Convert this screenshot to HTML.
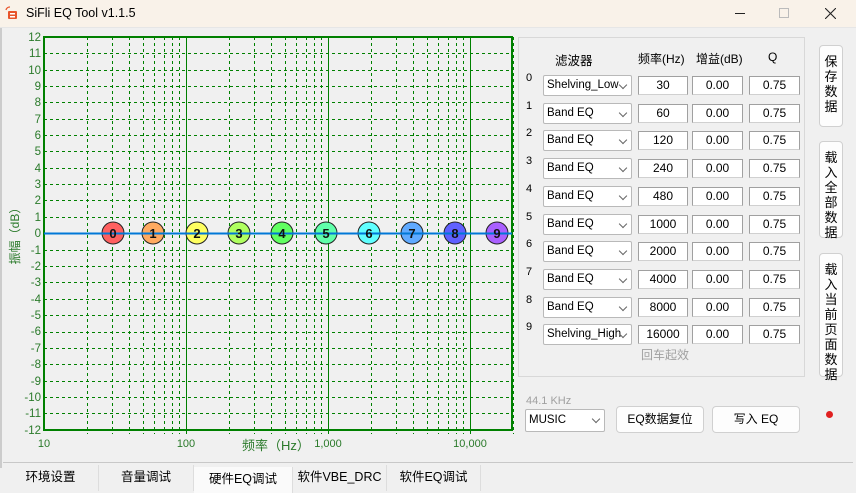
<!DOCTYPE html>
<html><head><meta charset="utf-8"><style>
*{box-sizing:border-box;margin:0;padding:0}
body{width:856px;height:493px;overflow:hidden;background:#f0f0f0;font-family:"Liberation Sans","Noto Sans CJK SC",sans-serif;font-size:12px;color:#000;position:relative}
.a{position:absolute}
.title{left:0;top:0;width:856px;height:28px;background:#f9f2e9;border-bottom:1px solid #e6e6e6}
.cb{position:absolute;height:21px;background:#fff;border:1px solid #b9b9b9;border-radius:2px;font-size:11.5px;line-height:19px;padding-left:3px;white-space:nowrap;overflow:hidden}
.cb:after{content:"";position:absolute;right:5px;top:6px;width:5px;height:5px;border-right:1px solid #666;border-bottom:1px solid #666;transform:rotate(45deg)}
.tb{position:absolute;height:19px;background:#fff;border:1px solid #a0a0a0;border-bottom-color:#d0d0d0;text-align:center;font-size:12px;line-height:17px}
.btn{position:absolute;background:#fdfdfd;border:1px solid #d0d0d0;border-radius:4px;text-align:center}
.vb{font-size:13px;line-height:15px;width:24px;left:819px;padding-top:8px}
.num{position:absolute;left:526px;font-size:11px}
.tab{position:absolute;top:465px;height:26px;text-align:center;line-height:24px;font-size:12.5px;border-right:1px solid #ddd}
</style></head><body>
<div class="a title">
<svg class="a" style="left:5px;top:6px" width="14" height="14"><rect x="3" y="5" width="9" height="8" rx="1" fill="#e8542a"/><rect x="5" y="7" width="5" height="1.5" fill="#fff"/><rect x="5" y="10" width="5" height="1.5" fill="#fff"/><path d="M1 4a4 4 0 0 1 4-3" stroke="#e8542a" fill="none" stroke-width="1.3"/></svg>
<div class="a" style="left:26px;top:6px;font-size:12.5px">SiFli EQ Tool v1.1.5</div>
<div class="a" style="left:735px;top:13px;width:10px;height:1px;background:#222"></div>
<div class="a" style="left:779px;top:8px;width:10px;height:10px;border:1px solid #bbb"></div>
<svg class="a" style="left:825px;top:8px" width="11" height="11"><path d="M0 0L11 11M11 0L0 11" stroke="#222" stroke-width="1.1"/></svg>
</div>
<div class="a" style="left:0;top:28px;width:2px;height:440px;background:#ccc"></div>
<svg class="a" style="left:0;top:28px" width="516" height="432" font-family="Liberation Sans,sans-serif">
<g id="g"></g>
</svg>
<svg class="a" style="left:0;top:0" width="516" height="460" font-family="Liberation Sans, Noto Sans CJK SC, sans-serif">
<g stroke="#008000" stroke-width="1" stroke-dasharray="3,3" fill="none">
<path d="M44 53.5H512M44 70.5H512M44 86.5H512M44 102.5H512M44 119.5H512M44 135.5H512M44 151.5H512M44 168.5H512M44 184.5H512M44 200.5H512M44 217.5H512M44 250.5H512M44 266.5H512M44 282.5H512M44 299.5H512M44 315.5H512M44 332.5H512M44 348.5H512M44 364.5H512M44 381.5H512M44 397.5H512M44 413.5H512"/>
<path d="M87.5 37V434M112.5 37V434M129.5 37V434M143.5 37V434M154.5 37V434M164.5 37V434M172.5 37V434M179.5 37V434M229.5 37V434M254.5 37V434M271.5 37V434M285.5 37V434M296.5 37V434M306.5 37V434M314.5 37V434M321.5 37V434M371.5 37V434M396.5 37V434M413.5 37V434M427.5 37V434M438.5 37V434M448.5 37V434M456.5 37V434M463.5 37V434M513.5 37V434"/>
</g>
<path d="M186.5 37V434M328.5 37V434M470.5 37V434" stroke="#008000" stroke-width="1"/>
<rect x="44" y="37" width="468" height="393" fill="none" stroke="#008000" stroke-width="2"/>
<g font-size="11.5" fill="#2a7a2a" text-anchor="end">
<text x="41" y="41">12</text><text x="41" y="57">11</text><text x="41" y="74">10</text><text x="41" y="90">9</text><text x="41" y="106">8</text><text x="41" y="123">7</text><text x="41" y="139">6</text><text x="41" y="155">5</text><text x="41" y="172">4</text><text x="41" y="188">3</text><text x="41" y="204">2</text><text x="41" y="221">1</text><text x="41" y="237">0</text><text x="41" y="254">-1</text><text x="41" y="270">-2</text><text x="41" y="286">-3</text><text x="41" y="303">-4</text><text x="41" y="319">-5</text><text x="41" y="335">-6</text><text x="41" y="352">-7</text><text x="41" y="368">-8</text><text x="41" y="385">-9</text><text x="41" y="401">-10</text><text x="41" y="417">-11</text><text x="41" y="434">-12</text>
</g>
<g font-size="11" fill="#2a7a2a" text-anchor="middle">
<text x="44" y="447">10</text><text x="186" y="447">100</text><text x="328" y="447">1,000</text><text x="470" y="447">10,000</text>
<text x="276" y="450" font-size="13">频率（Hz）</text>
</g>
<text transform="translate(19,233) rotate(-90)" text-anchor="middle" font-size="12" fill="#2a7a2a">振幅（dB）</text>
<g stroke="#222" stroke-width="1" font-size="13" text-anchor="middle">
<circle cx="113" cy="233" r="11" fill="#ff6060"/><circle cx="153" cy="233" r="11" fill="#ffaa60"/><circle cx="197" cy="233" r="11" fill="#ffff60"/><circle cx="239" cy="233" r="11" fill="#b0ff60"/><circle cx="282" cy="233" r="11" fill="#60ff60"/><circle cx="326" cy="233" r="11" fill="#60ffaa"/><circle cx="369" cy="233" r="11" fill="#60ffff"/><circle cx="412" cy="233" r="11" fill="#60aaff"/><circle cx="455" cy="233" r="11" fill="#6060ff"/><circle cx="497" cy="233" r="11" fill="#aa60ff"/>
</g>
<path d="M44 233.5H512" stroke="#0078d7" stroke-width="2"/>
<g font-size="13" fill="#111" text-anchor="middle" font-weight="bold">
<text x="113" y="238">0</text><text x="153" y="238">1</text><text x="197" y="238">2</text><text x="239" y="238">3</text><text x="282" y="238">4</text><text x="326" y="238">5</text><text x="369" y="238">6</text><text x="412" y="238">7</text><text x="455" y="238">8</text><text x="497" y="238">9</text>
</g>
</svg>
<div class="a" style="left:518px;top:37px;width:287px;height:340px;border:1px solid #d8d8d8"></div>
<div class="a" style="left:555px;top:50px;font-size:12.5px">滤波器</div>
<div class="a" style="left:638px;top:50px;font-size:12px">频率(Hz)</div>
<div class="a" style="left:696px;top:50px;font-size:12px">增益(dB)</div>
<div class="a" style="left:768px;top:50px;font-size:12px">Q</div>
<div id="rows"></div>
<div class="a" style="left:641px;top:346px;color:#a0a0a0;font-size:12px">回车起效</div>
<div class="btn vb" style="top:45px;height:82px">保存数据</div>
<div class="btn vb" style="top:141px;height:97px">载入全部数据</div>
<div class="btn vb" style="top:253px;height:124px">载入当前页面数据</div>
<div class="a" style="left:826px;top:411px;width:7px;height:7px;border-radius:50%;background:#e02020"></div>
<div class="a" style="left:526px;top:395px;color:#a0a0a0;font-size:11px">44.1 KHz</div>
<div class="cb" style="left:525px;top:409px;width:80px;height:23px;line-height:21px">MUSIC</div>
<div class="btn" style="left:616px;top:406px;width:88px;height:27px;line-height:25px">EQ数据复位</div>
<div class="btn" style="left:712px;top:406px;width:88px;height:27px;line-height:25px">写入 EQ</div>
<div class="a" style="left:3px;top:462px;width:850px;height:1px;background:#c8c8c8"></div>
<div class="tab" style="left:3px;width:96px">环境设置</div>
<div class="tab" style="left:99px;width:95px">音量调试</div>
<div class="tab" style="left:194px;width:99px;background:#fafafa;top:467px">硬件EQ调试</div>
<div class="tab" style="left:293px;width:94px">软件VBE_DRC</div>
<div class="tab" style="left:387px;width:94px">软件EQ调试</div>
<script>
var f=[30,60,120,240,480,1000,2000,4000,8000,16000],h='';
for(var i=0;i<10;i++){var y=75+i*27.7;var t=i==0?'Shelving_Low':i==9?'Shelving_High':'Band EQ';
h+='<div class="num" style="top:'+(y-3)+'px">'+i+'</div><div class="cb" style="left:543px;top:'+y+'px;width:89px">'+t+'</div><div class="tb" style="left:638px;top:'+(y+1)+'px;width:50px">'+f[i]+'</div><div class="tb" style="left:692px;top:'+(y+1)+'px;width:51px">0.00</div><div class="tb" style="left:749px;top:'+(y+1)+'px;width:51px">0.75</div>';}
document.getElementById('rows').innerHTML=h;
</script>
</body></html>
